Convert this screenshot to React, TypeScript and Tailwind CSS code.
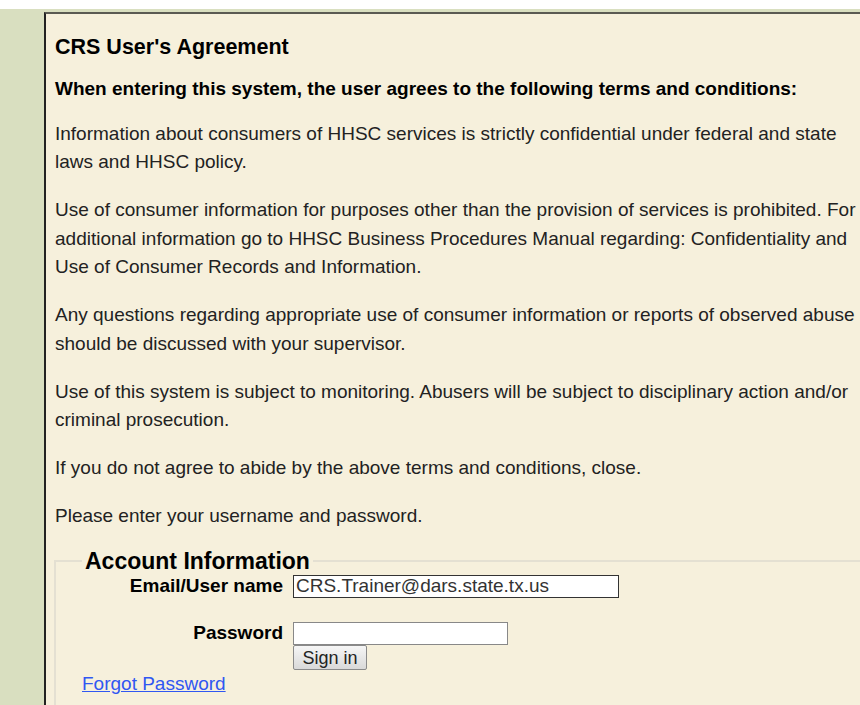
import { useState } from 'react'

const terms = [
  'Information about consumers of HHSC services is strictly confidential under federal and state laws and HHSC policy.',
  'Use of consumer information for purposes other than the provision of services is prohibited. For additional information go to HHSC Business Procedures Manual regarding: Confidentiality and Use of Consumer Records and Information.',
  'Any questions regarding appropriate use of consumer information or reports of observed abuse should be discussed with your supervisor.',
  'Use of this system is subject to monitoring. Abusers will be subject to disciplinary action and/or criminal prosecution.',
  'If you do not agree to abide by the above terms and conditions, close.',
  'Please enter your username and password.',
]

export default function App() {
  const [username, setUsername] = useState('CRS.Trainer@dars.state.tx.us')
  const [password, setPassword] = useState('')

  return (
    <div
      className="h-[705px] overflow-hidden bg-white pt-[9px] text-[19px] text-[#222]"
      style={{ fontFamily: '"Liberation Sans", Arial, sans-serif' }}
    >
      <div className="h-full bg-[#d9dfc0] pl-[44px] pt-[3px]">
        <div className="h-full w-[830px] border-l-2 border-t-2 border-l-[#222] border-t-[#5a5a52] bg-[#f6f0dc] pl-[9px] pt-[17px]">
          <h1 className="mb-[12px] text-[21.5px] leading-[32px] font-bold text-black">CRS User's Agreement</h1>
          <p className="mb-[16px] leading-[28.5px] font-bold text-black">
            When entering this system, the user agrees to the following terms and conditions:
          </p>
          {terms.map((t) => (
            <p key={t} className="mb-[19.5px] w-[808px] leading-[28.5px]">
              {t}
            </p>
          ))}

          {/* Login box */}
          <fieldset className="-mt-[2px] -ml-px border-2 border-r-0 border-[#e4e0d2] pb-[40px] pl-[26px]">
            <legend className="px-[3px] text-[23px] leading-[26px] font-bold text-black">Account Information</legend>
            <div className="mt-px grid grid-cols-[201px_auto] gap-x-[10px]">
              <label className="flex h-[23px] items-center justify-end font-bold text-black">Email/User name</label>
              <input
                value={username}
                onChange={(e) => setUsername(e.target.value)}
                className="h-[23px] w-[326px] border border-[#333] bg-white px-[2px] text-[19px] text-[#333] outline-none"
              />
              <div className="col-span-2 h-[24px]" />
              <label className="flex h-[23px] items-center justify-end font-bold text-black">Password</label>
              <div className="flex flex-col items-start">
                <input
                  type="password"
                  value={password}
                  onChange={(e) => setPassword(e.target.value)}
                  className="h-[23px] w-[215px] border border-[#888] bg-white px-[2px] text-[19px] outline-none"
                />
                <button className="h-[25px] w-[74px] rounded-[2px] border border-[#8a8a8a] bg-gradient-to-b from-[#f6f6f6] to-[#d9d9d9] text-[18px] leading-none text-[#222]">
                  Sign in
                </button>
              </div>
            </div>
            <a href="#" className="inline-block leading-[22px] text-[#3057f2] underline">
              Forgot Password
            </a>
          </fieldset>
        </div>
      </div>
    </div>
  )
}
